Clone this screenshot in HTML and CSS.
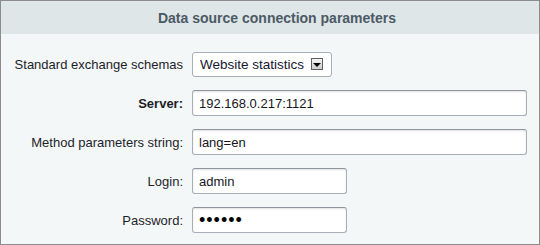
FILE: index.html
```html
<!DOCTYPE html>
<html lang="en">
<head>
    <meta charset="UTF-8">
    <meta name="viewport" content="width=device-width, initial-scale=1.0">
    <title>Data source connection parameters</title>
    <link rel="stylesheet" href="styles.css">
</head>
<body>
    <div class="panel">
        <div class="panel-head">Data source connection parameters</div>
        <form class="form">
            <label for="schema">Standard exchange schemas</label>
            <div class="select-wrap">
                <select id="schema" class="select">
                    <option>Website statistics</option>
                </select>
                <span class="select-arrow"></span>
            </div>

            <label for="server" class="strong">Server:</label>
            <input type="text" id="server" class="field" value="192.168.0.217:1121">

            <label for="params">Method parameters string:</label>
            <input type="text" id="params" class="field" value="lang=en">

            <label for="login">Login:</label>
            <input type="text" id="login" class="field short" value="admin">

            <label for="pass">Password:</label>
            <input type="password" id="pass" class="field short pass" value="secret">
        </form>
    </div>
</body>
</html>
```

FILE: styles.css
```css
body{margin: 0; font: 13px "Liberation Sans", Arial, sans-serif; color: #1e1e28;}
.panel{width: 540px; height: 245px; box-sizing: border-box; border: 1px solid #8c8c8c; background-color: #f3f7f8;}
.panel-head{height: 33px; display: flex; align-items: center; justify-content: center; padding-left: 14px; background-color: #dfe6e7; color: #4b5a66; font-weight: bold; font-size: 14px;}
.form{display: grid; grid-template-columns: 182px 1fr; column-gap: 9px; row-gap: 13px; padding: 18px 12px 0 0; align-items: center;}
.form label{text-align: right; white-space: nowrap;}
.form label.strong{font-weight: bold;}
.field{height: 26px; box-sizing: border-box; margin: 0; padding: 0 6px; border: 1px solid #a7aeb6; border-top-color: #8e959d; border-radius: 3px; background-color: #fff; box-shadow: inset 0 1px 2px rgba(0,0,0,0.12); font: 13px "Liberation Sans", Arial, sans-serif; color: #161622; outline: none;}
.field.short{width: 155px;}
.field.pass{letter-spacing: 1px; font-size: 18px; color: #000;}
.select-wrap{position: relative; width: 140px; height: 25px;}
.select{appearance: none; -webkit-appearance: none; width: 100%; height: 100%; box-sizing: border-box; margin: 0; padding: 0 0 0 7px; border: 1px solid #a7aeb6; border-radius: 3px; background-color: #fff; font: 13.5px "Liberation Sans", Arial, sans-serif; color: #161630; outline: none;}
.select-arrow{position: absolute; top: 6px; right: 9px; width: 10px; height: 10px; border: 1px solid #5e5e5e; background: linear-gradient(#f4f4f4, #cdcdcd); pointer-events: none;}
.select-arrow::after{content: ""; position: absolute; left: 1px; top: 4px; border-left: 4px solid transparent; border-right: 4px solid transparent; border-top: 4px solid #000;}
```
